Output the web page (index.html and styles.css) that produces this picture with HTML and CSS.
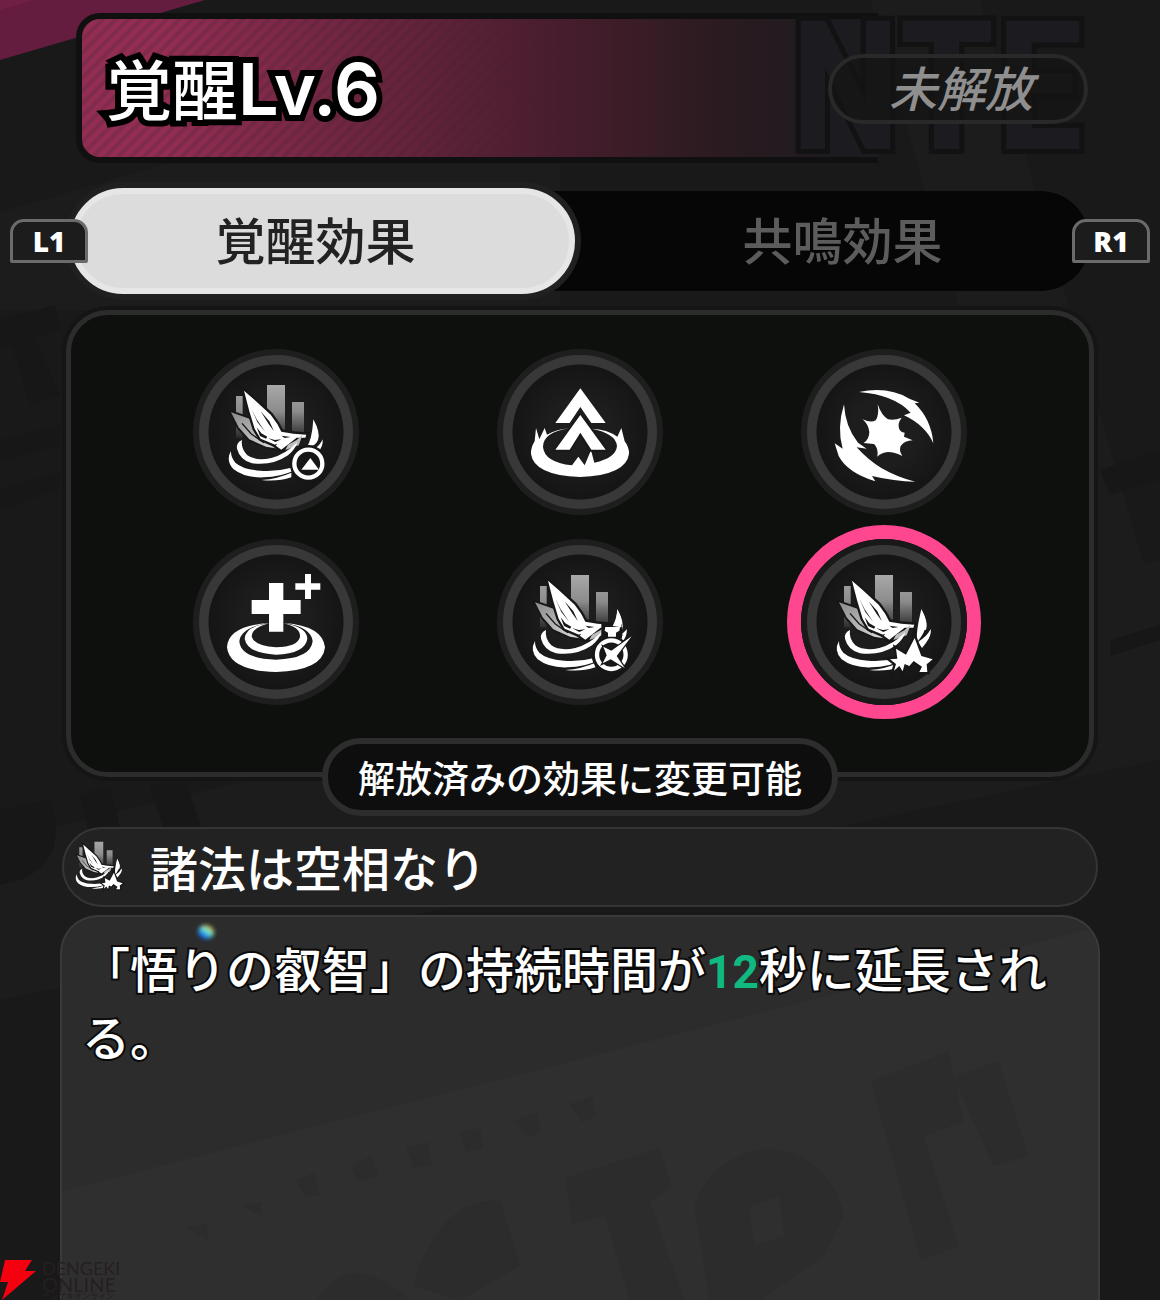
FILE: index.html
```html
<!DOCTYPE html>
<html lang="ja">
<head>
<meta charset="utf-8">
<meta name="viewport" content="width=device-width, initial-scale=1">
<title>覚醒Lv.6</title>
<link rel="stylesheet" href="styles.css">
</head>
<body>
<svg class="defs" width="0" height="0" aria-hidden="true">
  <defs>
    <linearGradient id="bar" x1="0" y1="0" x2="0" y2="1">
      <stop offset="0" stop-color="#a8a8a8"/><stop offset=".5" stop-color="#8c8c8c"/><stop offset="1" stop-color="#2a2a2a"/>
    </linearGradient>
    <linearGradient id="wing" x1="0" y1="0" x2="1" y2="1">
      <stop offset="0" stop-color="#8a8a8a"/><stop offset="1" stop-color="#e0e0e0"/>
    </linearGradient>
    <symbol id="lotus" viewBox="0 0 540 540">
      <path fill="url(#bar)" d="M150 168h20v125h-20zM243 135h54v150h-54zM318 186h36v94h-36z"/>
      <path fill="url(#wing)" stroke="#171717" stroke-width="12" paint-order="stroke" d="M135 217L192 237 250 290 288 328 240 320 190 298 158 262z"/>
      <path fill="none" stroke="#171717" stroke-width="4" d="M168 250L196 282 234 308"/>
      <path fill="#fff" stroke="#171717" stroke-width="14" paint-order="stroke" d="M174 152L206 180 254 224 274 252 286 275 322 281 361 284 358 293 332 293 308 312 286 329 262 312 224 296 206 266 190 214z"/>
      <path fill="#171717" d="M196 206L212 238 238 276 214 246zM224 214L250 244 264 274 248 252zM212 262L226 280 244 290 240 296 222 288zM246 294L266 300 286 298 268 306zM286 287L314 291 296 294zM260 315L274 312 268 319z"/>
      <path fill="#bdbdbd" d="M306 314L332 300 350 284 338 316 298 330z"/>
      <path fill="#fff" d="M168 300Q150 308 153 326 162 360 198 370 260 378 306 346 328 328 334 306 300 342 256 354 210 364 184 346 164 326 168 300z"/>
      <path fill="#fff" d="M153 318L188 358 166 344zM135 333Q118 362 143 388 176 414 232 412 286 410 322 392L316 383Q268 396 222 392 170 388 148 368 134 352 135 333z"/>
      <path fill="#fff" d="M226 420Q276 416 316 398L316 412Q274 426 226 420z"/>
      <path fill="#fff" d="M382 238Q404 278 396 300 388 320 362 322 378 300 382 238zM410 298Q412 320 396 336L386 326Q402 316 410 298z"/>
    </symbol>
    <symbol id="lotus-burst" viewBox="0 0 540 540">
      <use href="#lotus" width="540" height="540"/>
      <path fill="#171717" d="M350 318L362 296 398 300 400 340 384 352z"/>
      <path fill="#fff" d="M382 238Q396 266 397 282 394 306 370 336 364 312 382 238zM410 298Q410 326 384 354L372 336Q400 318 410 298z"/>
      <path fill="#fff" stroke="#171717" stroke-width="14" paint-order="stroke" d="M362 324L382 378 416 388 398 403 400 426H376L384 410 359 393 346 408 332 402 326 424 316 408 300 422 306 402 288 388 310 386 306 356 336 374z"/>
    </symbol>
  </defs>
</svg>

<svg class="backdrop" viewBox="0 0 1160 1300" preserveAspectRatio="xMidYMin slice" aria-hidden="true">
  <path fill="#641d3e" d="M0 0H205L0 60z"/>
  <path fill="#7a2345" opacity=".5" d="M0 0H35L0 10z"/>
  <g fill="#1c1c1c">
    <path d="M0 212L560 50V310H0z"/>
    <path d="M870 0H980L1160 620V760H1090z"/>
    <path d="M0 840L1160 560V760L0 1000z"/>
  </g>
  <g fill="#171717">
    <path d="M0 320L55 305 60 330 35 338 60 395 30 405 12 345 0 348zM0 440L60 425V445L0 462zM0 490L60 472V488L0 510z"/>
    <path d="M80 795L110 785 125 850 95 860zM150 785L185 778 205 840 170 850zM0 810L50 800Q70 860 20 880L0 885z"/>
    <path d="M1100 470L1160 450V480L1110 495zM1110 640L1160 625V640L1110 656z"/>
  </g>
</svg>

<main class="screen">
  <header class="header">
    <div class="banner"><h1 class="title">覚醒<span class="latin">Lv.6</span></h1></div>
    <div class="brand" aria-hidden="true">NTE</div>
    <p class="status">未解放</p>
  </header>

  <nav class="tabs" aria-label="効果">
    <button class="key" type="button">L1</button>
    <div class="tablist">
      <button class="tab tab-active" type="button" aria-pressed="true">覚醒効果</button>
      <button class="tab" type="button" aria-pressed="false">共鳴効果</button>
    </div>
    <button class="key" type="button">R1</button>
  </nav>

  <section class="panel">
    <div class="effects">
      <button class="effect" type="button" aria-label="効果 1">
        <svg viewBox="21 27 498 498"><use href="#lotus" width="540" height="540"/>
          <circle cx="367" cy="371" r="56" fill="#171717"/><circle cx="367" cy="371" r="42" fill="none" stroke="#fff" stroke-width="13"/><path fill="#fff" d="M373 354L399 389H346z"/></svg>
      </button>
      <button class="effect" type="button" aria-label="効果 2">
        <svg viewBox="21 27 498 498"><path fill="#fff" fill-rule="evenodd" d="M138 264L148 298 164 264 171 284Q200 268 240 265 160 276 159 320 162 366 246 376L265 350 284 376 303 331 313 368Q378 354 381 318 378 280 304 266 352 268 382 290L394 264 404 304Q418 322 417 342 408 406 270 411 132 406 123 342 122 322 134 304z"/>
        <path fill="#fff" d="M271 145L347 249H304L271 201 239 249H196z"/>
        <path fill="#fff" stroke="#191919" stroke-width="12" paint-order="stroke" d="M271 225L347 329H304L271 278 239 329H196z"/></svg>
      </button>
      <button class="effect" type="button" aria-label="効果 3">
        <svg viewBox="21 27 498 498"><g fill="#fff"><path d="M195 156Q282 138 346 176L376 188 362 190Q412 238 418 310 394 256 330 226L350 218Q300 164 195 156z"/><path d="M150 193Q154 262 192 308L218 326 188 322Q222 360 262 384 310 412 364 425 300 424 234 408L244 424Q160 398 134 348L122 310 146 326Q128 264 150 193z"/><path d="M251 193Q262 226 282 238 302 242 323 233 308 252 317 270 322 278 332 278L330 290 356 301Q332 302 320 318 314 332 325 348 302 336 282 336 262 338 250 350 254 324 240 312L209 309Q226 298 226 276 224 254 206 238 232 250 246 240 256 222 251 193z"/></g></svg>
      </button>
      <button class="effect" type="button" aria-label="効果 4">
        <svg viewBox="21 27 498 498"><g fill="#fff"><path fill-rule="evenodd" d="M248 279Q126 288 123 352 130 422 270 426 410 422 417 352 410 288 296 279 376 292 380 334 374 386 270 389 164 386 160 334 164 292 248 279z"/><path fill-rule="evenodd" d="M250 280Q178 288 176 326 184 370 270 374 358 370 364 326 362 290 292 280 344 292 342 320 336 350 270 352 206 348 197 320 198 292 250 280z"/><path d="M249 159h43v51h52v42h-52v53h-43v-53h-52v-42h52zM357 132h18v28h28v19h-28v28h-18v-28h-29v-19h29z"/></g></svg>
      </button>
      <button class="effect" type="button" aria-label="効果 5">
        <svg viewBox="21 27 498 498"><use href="#lotus" width="540" height="540"/>
          <path fill="#171717" d="M334 282H396V326H334z"/><circle cx="363" cy="375" r="58" fill="#171717"/>
          <path fill="#fff" d="M382 238Q400 270 394 292L368 288Q380 268 382 238zM346 291H390L388 302 378 308V320H354V308L344 302zM396 312L411 298 404 322z"/>
          <circle cx="364" cy="374" r="43" fill="none" stroke="#fff" stroke-width="13"/>
          <path fill="#fff" stroke="#171717" stroke-width="7" paint-order="stroke" d="M425 319L380 378 404 414 362 388 338 400 350 376 340 350 364 362z"/></svg>
      </button>
      <button class="effect effect-selected" type="button" aria-label="効果 6">
        <svg viewBox="21 27 498 498"><use href="#lotus-burst" width="540" height="540"/></svg>
      </button>
    </div>
    <p class="note">解放済みの効果に変更可能</p>
  </section>

  <h2 class="skill">
    <svg class="skill-icon" viewBox="124 130 306 306" aria-hidden="true"><use href="#lotus-burst" width="540" height="540"/></svg>
    諸法は空相なり
  </h2>

  <section class="description">
    <svg class="description-art" viewBox="0 0 1040 385" preserveAspectRatio="xMinYMin slice" aria-hidden="true">
      <path fill="#2f2f2f" d="M0 275L1040 10V385H0z"/>
      <g fill="#2c2c2c">
        <path d="M505 262L600 232 612 272 590 285 625 385H570L545 300 512 308z"/>
        <path fill-rule="evenodd" d="M635 290Q650 240 710 232 770 240 785 300L765 340 700 385H650zM690 290L720 280 725 320 695 330z"/>
        <path d="M812 165L890 135 905 205 865 220 900 330 862 345z"/>
        <path d="M895 160L940 145 970 240 935 250z"/>
        <path d="M255 385Q290 330 350 385zM352 370Q380 280 440 285L460 350 400 385z"/>
        <path d="M510 188l22-8 4 20-14 6zM455 204l22-8 4 20-14 6zM398 216l22-4 2 20-16 4zM345 232l22-6 4 22-18 4zM290 250l20-10 8 20-22 6zM235 265l18-8 6 22-14 2zM180 290l20-4v14zM125 312l20-4 2 16z"/>
      </g>
    </svg>
    <i class="spark" aria-hidden="true"></i>
    <p class="text">「悟りの叡智」の持続時間が<em class="value">12</em>秒に延長される。</p>
  </section>
</main>

<div class="watermark">
  <svg class="bolt" viewBox="0 0 36 40" aria-hidden="true"><path fill="#f5000f" d="M5 0H32L25 11H36L2 40 8 22H0z"/></svg>
  <div class="wordmark"><span>DENGEKI</span><span class="wide">ONLINE</span><small>デンゲキオンライン</small></div>
</div>
</body>
</html>
```
FILE: styles.css
```css
* { box-sizing: border-box; }

body {
  position: relative;
  min-height: 100vh;
  margin: 0;
  overflow-x: hidden;
  background: #191919;
  color: #fff;
  font-family: "Noto Sans CJK JP", sans-serif;
  font-weight: 500;
}

h1, h2, p { margin: 0; font-weight: 500; }
button { padding: 0; border: 0; color: inherit; font: inherit; cursor: pointer; }
.defs { position: absolute; }

.backdrop {
  position: absolute;
  inset: 0;
  z-index: -1;
  width: 100%;
  height: 100%;
}

.screen {
  display: flex;
  flex-direction: column;
  min-height: 100vh;
  padding-top: 13px;
}

/* Header */
.header {
  position: relative;
  display: flex;
  height: 150px;
  margin: 0 76px 25px;
}

.banner {
  flex: 1;
  display: flex;
  align-items: center;
  padding: 0 24px 4px;
  border: 6px solid #101011;
  border-right: 0;
  border-radius: 24px 0 0 24px;
  background:
    linear-gradient(90deg, rgba(71, 29, 45, 0) 10%, #471d2d 60%, #2b1b20 80%, #1b1b20 96%),
    repeating-linear-gradient(135deg, #942d53 0 3px, #7f2b4b 5px 7px, #942d53 9px);
}

.title {
  font-size: 66px;
  line-height: 80px;
  -webkit-text-stroke: 12px #000;
  paint-order: stroke fill;
  white-space: nowrap;
}

.latin {
  font-family: Inter, sans-serif;
  font-size: 72px;
  font-weight: 600;
  line-height: 1;
}

.brand {
  position: relative;
  flex: none;
  display: flex;
  justify-content: flex-end;
  width: 206px;
  color: #1b1b20;
  font: 700 180px/150px "Roboto Condensed", "Open Sans Condensed", "Open Sans", sans-serif;
  -webkit-text-stroke: 10px #121213;
  paint-order: stroke fill;
}

.status {
  position: absolute;
  top: 41px;
  right: -4px;
  z-index: 2;
  width: 260px;
  height: 70px;
  padding-left: 6px;
  border: 4px solid #292929;
  border-radius: 35px;
  background: rgba(20, 20, 20, .7);
  color: #8f8f8f;
  font-size: 48px;
  font-style: italic;
  line-height: 56px;
  text-align: center;
}

/* Tabs */
.tabs {
  display: flex;
  align-items: center;
  height: 106px;
  margin-bottom: 16px;
  padding: 0 10px;
}

.key {
  position: relative;
  z-index: 1;
  width: 78px;
  height: 44px;
  border: 3px solid #6b6b6b;
  border-radius: 14px 14px 2px 2px;
  background: #1c1c1c;
  font: 800 28px/36px "Open Sans", sans-serif;
}

.tablist {
  flex: 1;
  display: flex;
  align-items: center;
  height: 100px;
  margin: 0 -18px;
  border-radius: 50px;
  background: #060606;
}

.tab {
  flex: 1;
  padding: 0 0 6px 20px;
  background: none;
  color: #5c5c5c;
  font-size: 50px;
  line-height: 88px;
}

.tab-active {
  flex: 0 0 49.5%;
  padding: 0 14px 6px 0;
  border: 6px solid #e6e6e6;
  border-radius: 53px;
  background: #dcdcdc;
  box-shadow: 0 0 0 6px #202020;
  color: #222;
}

/* Effect picker */
.panel {
  display: flex;
  flex-direction: column;
  align-items: center;
  height: 467px;
  margin: 0 66px 50px;
  padding-top: 34px;
  border: 5px solid #2c2c2d;
  border-radius: 42px;
  background: #0e100e;
  box-shadow: 0 0 0 4px #151515;
}

.effects {
  display: grid;
  grid-template-columns: repeat(3, 1fr);
  row-gap: 24px;
  justify-items: center;
  width: 100%;
  padding: 0 53px;
}

.effect {
  width: 166px;
  height: 166px;
  border: 6px solid #1d1e1d;
  border-radius: 50%;
  background: radial-gradient(circle, #1d1d1d 0 30%, #151515 67px, #383838 68px);
}

.effect svg { display: block; width: 166px; height: 166px; margin: -6px; }
.effect-selected { border-color: #191919; box-shadow: 0 0 0 14px #ff4790; }

.note {
  margin-top: 33px;
  padding: 0 30px;
  border: 6px solid #2d2d2d;
  border-radius: 39px;
  background: #0e0e0e;
  font-size: 37px;
  line-height: 66px;
  white-space: nowrap;
}

/* Selected skill */
.skill {
  display: flex;
  align-items: center;
  gap: 25px;
  height: 80px;
  margin: 0 62px 8px;
  padding: 0 10px 2px 11px;
  border: 2px solid #353535;
  border-radius: 40px;
  background: #222;
  font-size: 48px;
  line-height: 74px;
}

.skill-icon { flex: none; width: 50px; height: 50px; }

.description {
  position: relative;
  flex: 1;
  min-height: 385px;
  margin: 0 60px;
  padding: 16px 20px;
  border: 2px solid #3a3a3a;
  border-bottom: 0;
  border-radius: 38px 38px 0 0;
  background: #2c2c2c;
  overflow: hidden;
}

.description-art { position: absolute; inset: 0; width: 100%; height: 100%; }

.spark {
  position: absolute;
  top: 8px;
  left: 136px;
  width: 16px;
  height: 14px;
  border-radius: 50%;
  background: linear-gradient(215deg, #c87a1c 10%, #8ff0c0 40%, #2fb0f0 60%, #0a2ad0 90%);
  filter: blur(2px);
}

.text {
  position: relative;
  font-size: 48px;
  line-height: 68px;
  -webkit-text-stroke: 4px #0a0a0a;
  paint-order: stroke fill;
}

.value {
  color: #10b981;
  font-family: Roboto, sans-serif;
  font-size: 46px;
  font-style: normal;
  font-weight: 700;
  line-height: 1;
  -webkit-text-stroke: 0;
}

/* Site mark */
.watermark {
  position: absolute;
  left: 0;
  bottom: 0;
  display: flex;
  gap: 6px;
  height: 40px;
}

.bolt { width: 36px; height: 40px; }

.wordmark {
  display: flex;
  flex-direction: column;
  color: #261f20;
  font: 400 18px/16px Lato, sans-serif;
}

.wide { font-size: 20px; }
.wordmark small { font: 500 8px/8px "Noto Sans CJK JP", sans-serif; }
```
